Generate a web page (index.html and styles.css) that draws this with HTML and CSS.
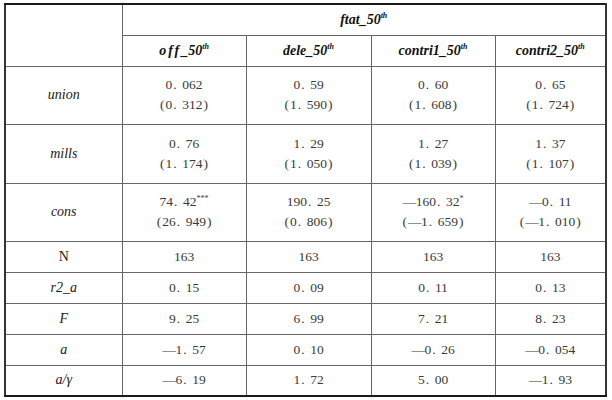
FILE: index.html
```html
<!DOCTYPE html>
<html>
<head>
<meta charset="utf-8">
<link rel="stylesheet" href="styles.css">
</head>
<body>
<table class="reg">
  <colgroup>
    <col class="c0"><col class="c1"><col class="c2"><col class="c3"><col class="c4">
  </colgroup>
  <tr class="h1">
    <td class="lab" rowspan="2"></td>
    <th colspan="4">ftat_50<sup>th</sup></th>
  </tr>
  <tr class="h2">
    <th><span class="sp">off</span>_50<sup>th</sup></th>
    <th>dele_50<sup>th</sup></th>
    <th>contri1_50<sup>th</sup></th>
    <th>contri2_50<sup>th</sup></th>
  </tr>
  <tr class="tall">
    <td class="lab it">union</td>
    <td>0<span class="pt">.</span>062<br><span class="lp">(</span>0<span class="pt">.</span>312<span class="rp">)</span></td>
    <td>0<span class="pt">.</span>59<br><span class="lp">(</span>1<span class="pt">.</span>590<span class="rp">)</span></td>
    <td>0<span class="pt">.</span>60<br><span class="lp">(</span>1<span class="pt">.</span>608<span class="rp">)</span></td>
    <td>0<span class="pt">.</span>65<br><span class="lp">(</span>1<span class="pt">.</span>724<span class="rp">)</span></td>
  </tr>
  <tr class="tall t2">
    <td class="lab it">mills</td>
    <td>0<span class="pt">.</span>76<br><span class="lp">(</span>1<span class="pt">.</span>174<span class="rp">)</span></td>
    <td>1<span class="pt">.</span>29<br><span class="lp">(</span>1<span class="pt">.</span>050<span class="rp">)</span></td>
    <td>1<span class="pt">.</span>27<br><span class="lp">(</span>1<span class="pt">.</span>039<span class="rp">)</span></td>
    <td>1<span class="pt">.</span>37<br><span class="lp">(</span>1<span class="pt">.</span>107<span class="rp">)</span></td>
  </tr>
  <tr class="tall">
    <td class="lab it">cons</td>
    <td>74<span class="pt">.</span>42<sup class="st">***</sup><br><span class="lp">(</span>26<span class="pt">.</span>949<span class="rp">)</span></td>
    <td>190<span class="pt">.</span>25<br><span class="lp">(</span>0<span class="pt">.</span>806<span class="rp">)</span></td>
    <td><span class="mn">—</span>160<span class="pt">.</span>32<sup class="st">*</sup><br><span class="lp">(</span><span class="mn">—</span>1<span class="pt">.</span>659<span class="rp">)</span></td>
    <td><span class="mn">—</span>0<span class="pt">.</span>11<br><span class="lp">(</span><span class="mn">—</span>1<span class="pt">.</span>010<span class="rp">)</span></td>
  </tr>
  <tr class="sm">
    <td class="lab up">N</td>
    <td>163</td><td>163</td><td>163</td><td>163</td>
  </tr>
  <tr class="sm">
    <td class="lab it">r2_a</td>
    <td>0<span class="pt">.</span>15</td><td>0<span class="pt">.</span>09</td><td>0<span class="pt">.</span>11</td><td>0<span class="pt">.</span>13</td>
  </tr>
  <tr class="sm">
    <td class="lab it">F</td>
    <td>9<span class="pt">.</span>25</td><td>6<span class="pt">.</span>99</td><td>7<span class="pt">.</span>21</td><td>8<span class="pt">.</span>23</td>
  </tr>
  <tr class="sm">
    <td class="lab it">a</td>
    <td><span class="mn">—</span>1<span class="pt">.</span>57</td><td>0<span class="pt">.</span>10</td><td><span class="mn">—</span>0<span class="pt">.</span>26</td><td><span class="mn">—</span>0<span class="pt">.</span>054</td>
  </tr>
  <tr class="sm">
    <td class="lab it">a/γ</td>
    <td><span class="mn">—</span>6<span class="pt">.</span>19</td><td>1<span class="pt">.</span>72</td><td>5<span class="pt">.</span>00</td><td><span class="mn">—</span>1<span class="pt">.</span>93</td>
  </tr>
</table>
</body>
</html>
```
FILE: styles.css
```css
html, body {
  margin: 0;
  padding: 0;
  background: #fff;
}
body {
  padding: 3px 0 0 4px;
}
.reg {
  border-collapse: collapse;
  table-layout: fixed;
  width: 603px;
  border-top: 2px solid #1a1a1a;
  border-left: 2px solid #333;
  border-right: 2px solid #333;
  border-bottom: 2px solid #1a1a1a;
  font-family: "Liberation Serif", "Times New Roman", serif;
  font-size: 13.5px;
  color: #3a3a3a;
}
.c0 { width: 117px; }
.c1 { width: 124px; }
.c2 { width: 125px; }
.c3 { width: 124px; }
.c4 { width: 111px; }
.reg td, .reg th {
  border: 1px solid #666;
  text-align: center;
  vertical-align: middle;
  padding: 0;
}
.reg td {
  line-height: 20px;
}
.reg th {
  font-weight: bold;
  font-style: italic;
  font-size: 14px;
  color: #111;
}
.h1 { height: 31px; }
.h2 { height: 31px; }
.tall { height: 58px; }
.t2 { height: 59px; }
.sm { height: 31px; }
.reg th sup {
  font-size: 8px;
  vertical-align: 6px;
  line-height: 0;
}
.sp {
  letter-spacing: 2px;
}
.pt {
  display: inline-block;
  width: 9px;
  padding-left: 1px;
  text-align: left;
}
.lp {
  display: inline-block;
  padding-right: 1px;
}
.rp {
  display: inline-block;
  padding-left: 1px;
}
.mn {
  display: inline-block;
  width: 13px;
  text-align: center;
}
.lab {
  font-size: 14px;
  color: #222;
}
.it {
  font-style: italic;
}
.up {
  font-style: normal;
}
.st {
  font-size: 8px;
  vertical-align: 5px;
  line-height: 0;
}
```
